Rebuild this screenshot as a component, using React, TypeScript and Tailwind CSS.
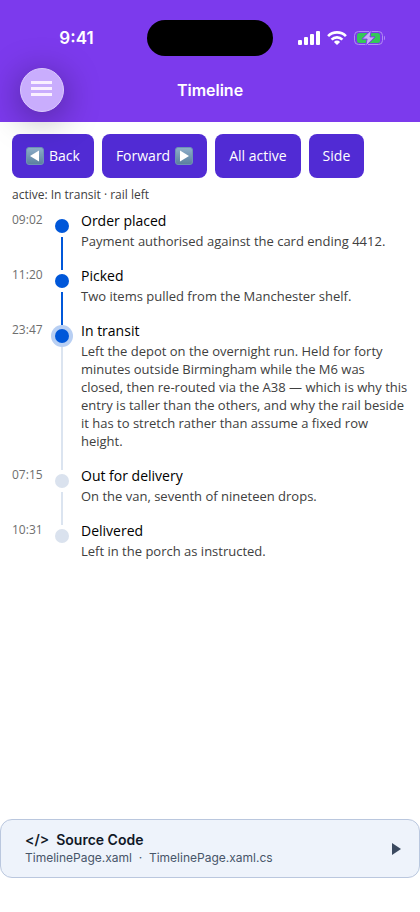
import React from 'react';
import clsx from 'clsx';

const entries = [
  {
    time: '09:02',
    title: 'Order placed',
    text: 'Payment authorised against the card ending 4412.',
  },
  {
    time: '11:20',
    title: 'Picked',
    text: 'Two items pulled from the Manchester shelf.',
  },
  {
    time: '23:47',
    title: 'In transit',
    text: 'Left the depot on the overnight run. Held for forty minutes outside Birmingham while the M6 was closed, then re-routed via the A38 — which is why this entry is taller than the others, and why the rail beside it has to stretch rather than assume a fixed row height.',
  },
  {
    time: '07:15',
    title: 'Out for delivery',
    text: 'On the van, seventh of nineteen drops.',
  },
  {
    time: '10:31',
    title: 'Delivered',
    text: 'Left in the porch as instructed.',
  },
];

const activeIndex = 2;

const SignalIcon = () => (
  <svg width="22" height="14" viewBox="0 0 22 14" fill="white" aria-hidden="true">
    <rect x="0" y="9" width="4" height="5" rx="1" />
    <rect x="6" y="6" width="4" height="8" rx="1" />
    <rect x="12" y="3" width="4" height="11" rx="1" />
    <rect x="18" y="0" width="4" height="14" rx="1" />
  </svg>
);

const WifiIcon = () => (
  <svg width="20" height="14" viewBox="0 0 20 14" fill="none" stroke="white" strokeWidth="2.7" aria-hidden="true">
    <path d="M1.1 5.1a12.6 12.6 0 0 1 17.8 0" />
    <path d="M4.6 8.6a7.6 7.6 0 0 1 10.8 0" />
    <path d="M10 14 6.9 10.9a4.4 4.4 0 0 1 6.2 0Z" fill="white" stroke="none" />
  </svg>
);

const BatteryIcon = () => (
  <svg width="32" height="16" viewBox="0 0 32 16" aria-hidden="true">
    <rect x="0.5" y="1.5" width="28" height="13" rx="4" fill="none" stroke="#b28cf3" />
    <rect x="3" y="3" width="23" height="10" rx="2.5" fill="#34c759" />
    <path d="M30 5.7v4.6c1.3-.5 1.3-4.1 0-4.6Z" fill="#b28cf3" />
    <path d="M17.5-.3 8.1 9.1h5L11.6 16.3l9.4-9.4h-5Z" fill="#c9adf8" stroke="#7c3aed" strokeWidth="1" />
  </svg>
);

const ArrowTile = ({ direction }: { direction: 'left' | 'right' }) => (
  <svg width="18" height="18" viewBox="0 0 18 18" aria-hidden="true">
    <defs>
      <linearGradient id={`tile-${direction}`} x1="0" y1="0" x2="0" y2="1">
        <stop offset="0" stopColor="#8fb0cb" />
        <stop offset="1" stopColor="#5b7f9e" />
      </linearGradient>
    </defs>
    <rect x="0.5" y="0.5" width="17" height="17" rx="2.5" fill={`url(#tile-${direction})`} stroke="#6d93b3" />
    <path d={direction === 'left' ? 'M13 3.5v11L4 9Z' : 'M5 3.5v11L14 9Z'} fill="white" />
  </svg>
);

const ActionButton = ({ children }: { children: React.ReactNode }) => (
  <button
    type="button"
    className="flex h-11 items-center gap-[5px] rounded-lg bg-[#512bd4] px-3.5 text-sm text-white"
  >
    {children}
  </button>
);

const Header = () => (
  <header className="relative bg-[#7c3aed] font-['Inter',sans-serif] text-white">
    <div className="grid grid-cols-[1fr_126px_1fr] items-center pt-5">
      <span className="pl-1.5 text-center text-[17px] leading-6 font-semibold">9:41</span>
      <span className="h-9 rounded-full bg-black" />
      <div className="flex items-center gap-[7px] pl-[25px]">
        <SignalIcon />
        <WifiIcon />
        <BatteryIcon />
      </div>
    </div>
    <div className="grid grid-cols-[44px_1fr_44px] items-center px-5 pt-3 pb-2.5">
      <button
        type="button"
        aria-label="Open menu"
        className="flex h-11 w-11 flex-col items-center justify-center gap-[3px] rounded-full border border-[#dccbfd] bg-[#c9adfd] pr-px pb-[3px] shadow-[0_6px_36px_rgba(0,0,0,0.4)]"
      >
        <span className="h-[3px] w-[21px] bg-[#faf0ff]" />
        <span className="h-[3px] w-[21px] bg-[#faf0ff]" />
        <span className="h-[3px] w-[21px] bg-[#faf0ff]" />
      </button>
      <h1 className="text-center text-base font-semibold">Timeline</h1>
    </div>
  </header>
);

const TimelineEntry = ({ entry, index }: { entry: (typeof entries)[0]; index: number }) => {
  const first = index === 0;
  const last = index === entries.length - 1;
  const reached = index <= activeIndex;

  return (
    <li className="flex gap-2">
      <time className="w-[31px] text-xs leading-[17px] text-[#6e6e6e]">{entry.time}</time>
      <div className="flex w-[22px] shrink-0 flex-col items-center">
        <span className={clsx('h-1 w-0.5', !first && (reached ? 'bg-[#0057d9]' : 'bg-[#dbe4f0]'))} />
        <span
          className={clsx(
            'flex h-[22px] w-[22px] items-center justify-center rounded-full',
            index === activeIndex && 'bg-[#b8cff3]'
          )}
        >
          <span className={clsx('h-3.5 w-3.5 rounded-full', reached ? 'bg-[#0057d9]' : 'bg-[#dae2ee]')} />
        </span>
        {!last && <span className={clsx('w-0.5 flex-1', index < activeIndex ? 'bg-[#0057d9]' : 'bg-[#dbe4f0]')} />}
      </div>
      <div className="min-w-0 flex-1 pb-4">
        <h2 className="text-sm leading-[19px] text-black">{entry.title}</h2>
        <p className="mt-0.5 text-[13px] leading-[18px] text-[#404040]">{entry.text}</p>
      </div>
    </li>
  );
};

const SourceCodeBar = () => (
  <button
    type="button"
    className="mt-auto mb-[34px] flex w-full items-center justify-between rounded-xl border border-[#bac7de] bg-[#eef3fb] pt-3 pr-[18px] pb-[11px] pl-6 text-left font-['Inter',sans-serif]"
  >
    <span>
      <span className="block text-sm leading-4 font-semibold whitespace-pre text-[#111827]">{'</>  Source Code'}</span>
      <span className="mt-0.5 block text-xs leading-4 whitespace-pre text-[#475569]">
        {'TimelinePage.xaml  ·  TimelinePage.xaml.cs'}
      </span>
    </span>
    <svg width="9" height="12" viewBox="0 0 9 12" aria-hidden="true">
      <path d="M0 0v12l9-6Z" fill="#3b4a60" />
    </svg>
  </button>
);

export default function App() {
  return (
    <div className="flex min-h-screen flex-col bg-white font-['Open_Sans',sans-serif]">
      <Header />
      <main className="px-3 pt-3">
        <div className="flex flex-wrap gap-2">
          <ActionButton>
            <ArrowTile direction="left" />
            Back
          </ActionButton>
          <ActionButton>
            Forward
            <ArrowTile direction="right" />
          </ActionButton>
          <ActionButton>All active</ActionButton>
          <ActionButton>Side</ActionButton>
        </div>
        <p className="mt-2 text-xs leading-[17px] text-[#404040]">active: In transit · rail left</p>
        <ol className="mt-2">
          {entries.map((entry, index) => (
            <TimelineEntry key={entry.title} entry={entry} index={index} />
          ))}
        </ol>
      </main>
      <SourceCodeBar />
    </div>
  );
}
